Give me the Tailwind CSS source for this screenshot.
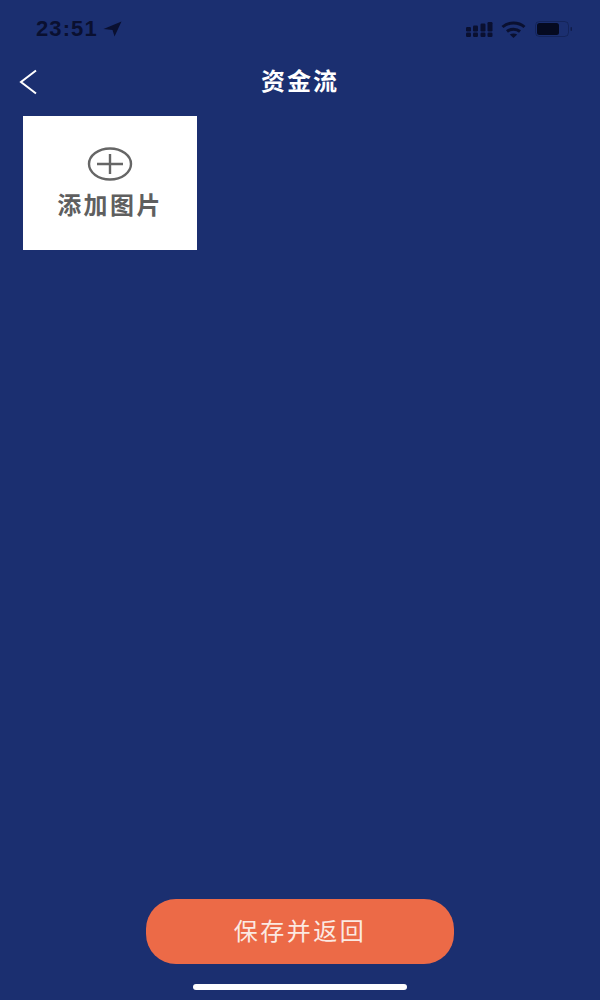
<!DOCTYPE html>
<html lang="zh">
<head>
<meta charset="utf-8">
<script src="https://cdn.jsdelivr.net/npm/@tailwindcss/browser@4"></script>
</head>
<body class="m-0">
<div class="w-[600px] h-[1000px] bg-[#1b2f70] flex flex-col overflow-hidden font-['Inter','Noto_Sans_CJK_SC',sans-serif]">
  <!-- status bar -->
  <div class="h-[60px] shrink-0 flex items-start justify-between pl-[36px] pr-[27px] pt-[18px] text-[#0a1030]">
    <div class="flex items-center gap-[6px] h-[22px]">
      <span class="text-[22px] leading-[22px] font-bold tracking-[1.1px] font-['Liberation_Sans',sans-serif]">23:51</span>
      <svg width="19" height="16" viewBox="0 0 19 16" fill="currentColor" class="-ml-[1px]"><path d="M0.5 8 L18.5 0.5 L11.5 15.5 L9.5 9 Z"/></svg>
    </div>
    <div class="flex items-center gap-[8px] h-[22px]">
      <svg width="27" height="15" viewBox="0 0 27 15" fill="currentColor">
        <rect x="0" y="5" width="5" height="4.5" rx="1.2"/><rect x="0" y="10.5" width="5" height="4.5" rx="1.2"/>
        <rect x="7" y="3.5" width="5" height="6" rx="1.2"/><rect x="7" y="10.5" width="5" height="4.5" rx="1.2"/>
        <rect x="14.5" y="1.5" width="5" height="8" rx="1.2"/><rect x="14.5" y="10.5" width="5" height="4.5" rx="1.2"/>
        <rect x="21.5" y="0" width="5" height="9.5" rx="1.2"/><rect x="21.5" y="10.5" width="5" height="4.5" rx="1.2"/>
      </svg>
      <svg width="25" height="17" viewBox="0 0 25 17" fill="none" stroke="currentColor" stroke-width="3">
        <path d="M1.5 6 C7.5 0.6 17.5 0.6 23.5 6"/>
        <path d="M6 10.5 C9.5 7.5 15.5 7.5 19 10.5"/>
        <path d="M12.5 17 L8.8 13.6 C11 12 14 12 16.2 13.6 Z" fill="currentColor" stroke="none"/>
      </svg>
      <svg width="38" height="16" viewBox="0 0 38 16" fill="none" class="ml-[1px]">
        <rect x="0.5" y="0.5" width="33" height="15" rx="4" stroke="currentColor" stroke-opacity="0.35"/>
        <rect x="2" y="2" width="22" height="12" rx="2.5" fill="#050a20"/>
        <rect x="35.5" y="6" width="1.5" height="4" rx="0.7" fill="currentColor" fill-opacity="0.6"/>
      </svg>
    </div>
  </div>
  <!-- nav -->
  <div class="h-[44px] shrink-0 relative flex items-center justify-center">
    <svg class="absolute left-[19px] top-[9px]" width="19" height="26" viewBox="0 0 19 26" fill="none" stroke="#ffffff" stroke-width="2"><path d="M17 1.5 L2 13 L17 24.5"/></svg>
    <span class="text-white text-[24px] leading-[28px] font-semibold tracking-[2px]">资金流</span>
  </div>
  <!-- content -->
  <div class="flex-1 pl-[23px] pt-[12px]">
    <div class="w-[174px] h-[134px] bg-white flex flex-col items-center pt-[30px]">
      <svg width="46" height="36" viewBox="0 0 46 36" fill="none" stroke="#666666" stroke-width="2.4">
        <ellipse cx="23" cy="18" rx="21" ry="15.5"/>
        <path d="M10 18 H36 M23 8 V28"/>
      </svg>
      <span class="mt-[10px] text-[#5f5f5f] text-[24px] leading-[28px] font-semibold tracking-[2.4px]">添加图片</span>
    </div>
  </div>
  <!-- button -->
  <div class="flex justify-center shrink-0">
    <button class="w-[308px] h-[65px] rounded-[30px] bg-[#ec6a47] text-[#fbe9e2] text-[24px] tracking-[2.5px] font-normal flex items-center justify-center">保存并返回</button>
  </div>
  <!-- home indicator -->
  <div class="h-[36px] shrink-0 flex justify-center pt-[20px]">
    <div class="w-[214px] h-[6px] rounded-full bg-white"></div>
  </div>
</div>
</body>
</html>
